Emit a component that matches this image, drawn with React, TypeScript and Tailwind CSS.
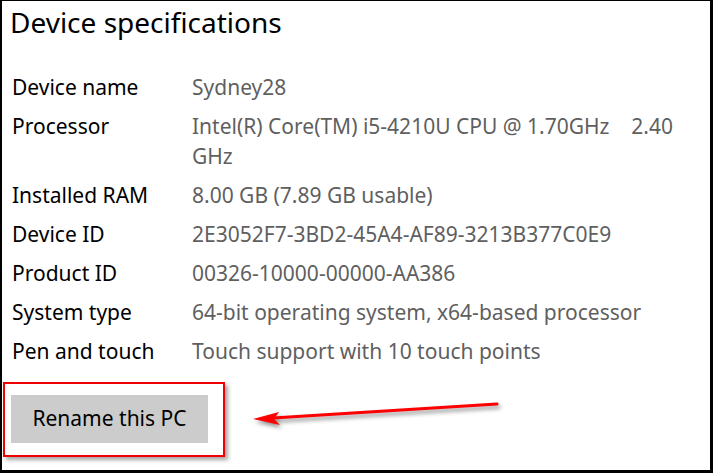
const specs = [
  { label: 'Device name', value: 'Sydney28' },
  { label: 'Processor', value: 'Intel(R) Core(TM) i5-4210U CPU @ 1.70GHz\u00a0\u00a0\u00a0\u00a02.40 GHz' },
  { label: 'Installed RAM', value: '8.00 GB (7.89 GB usable)' },
  { label: 'Device ID', value: '2E3052F7-3BD2-45A4-AF89-3213B377C0E9' },
  { label: 'Product ID', value: '00326-10000-00000-AA386' },
  { label: 'System type', value: '64-bit operating system, x64-based processor' },
  { label: 'Pen and touch', value: 'Touch support with 10 touch points' },
];

export default function App() {
  return (
    <div className="relative w-[713px] h-[473px] bg-white border-l-2 border-t border-r-[3px] border-b-[3px] border-black font-['Noto_Sans',sans-serif] overflow-hidden">
      <h1 className="pl-2 pt-[3px] text-[28px] leading-[36px] text-black">Device specifications</h1>

      <div className="mt-[32px] pl-[10px] flex flex-col gap-[9px]">
        {specs.map((s) => (
          <div key={s.label} className="flex text-[21px] leading-[30px]">
            <div className="w-[180px] shrink-0 text-black">{s.label}</div>
            <div className="w-[500px] text-[#5f5f5f]">{s.value}</div>
          </div>
        ))}
      </div>

      <div className="mt-[16px] ml-[1px] w-[222px] border-2 border-[#f00000] shadow-[3px_3px_4px_rgba(0,0,0,0.35)] pl-[6px] pt-[11px] pb-[12px]">
        <button className="w-[197px] h-[48px] bg-[#cccccc] text-[21px] text-black">Rename this PC</button>
      </div>

      <svg
        className="absolute left-[245px] top-[395px] drop-shadow-[2px_3px_2px_rgba(0,0,0,0.45)]"
        width="260"
        height="36"
        viewBox="0 0 260 36"
      >
        <line x1="250" y1="8" x2="26" y2="22" stroke="#ff0000" strokeWidth="3" strokeLinecap="round" />
        <path d="M6 23 L32 16 L27 23 L33 29 Z" fill="#ff0000" />
      </svg>
    </div>
  );
}
